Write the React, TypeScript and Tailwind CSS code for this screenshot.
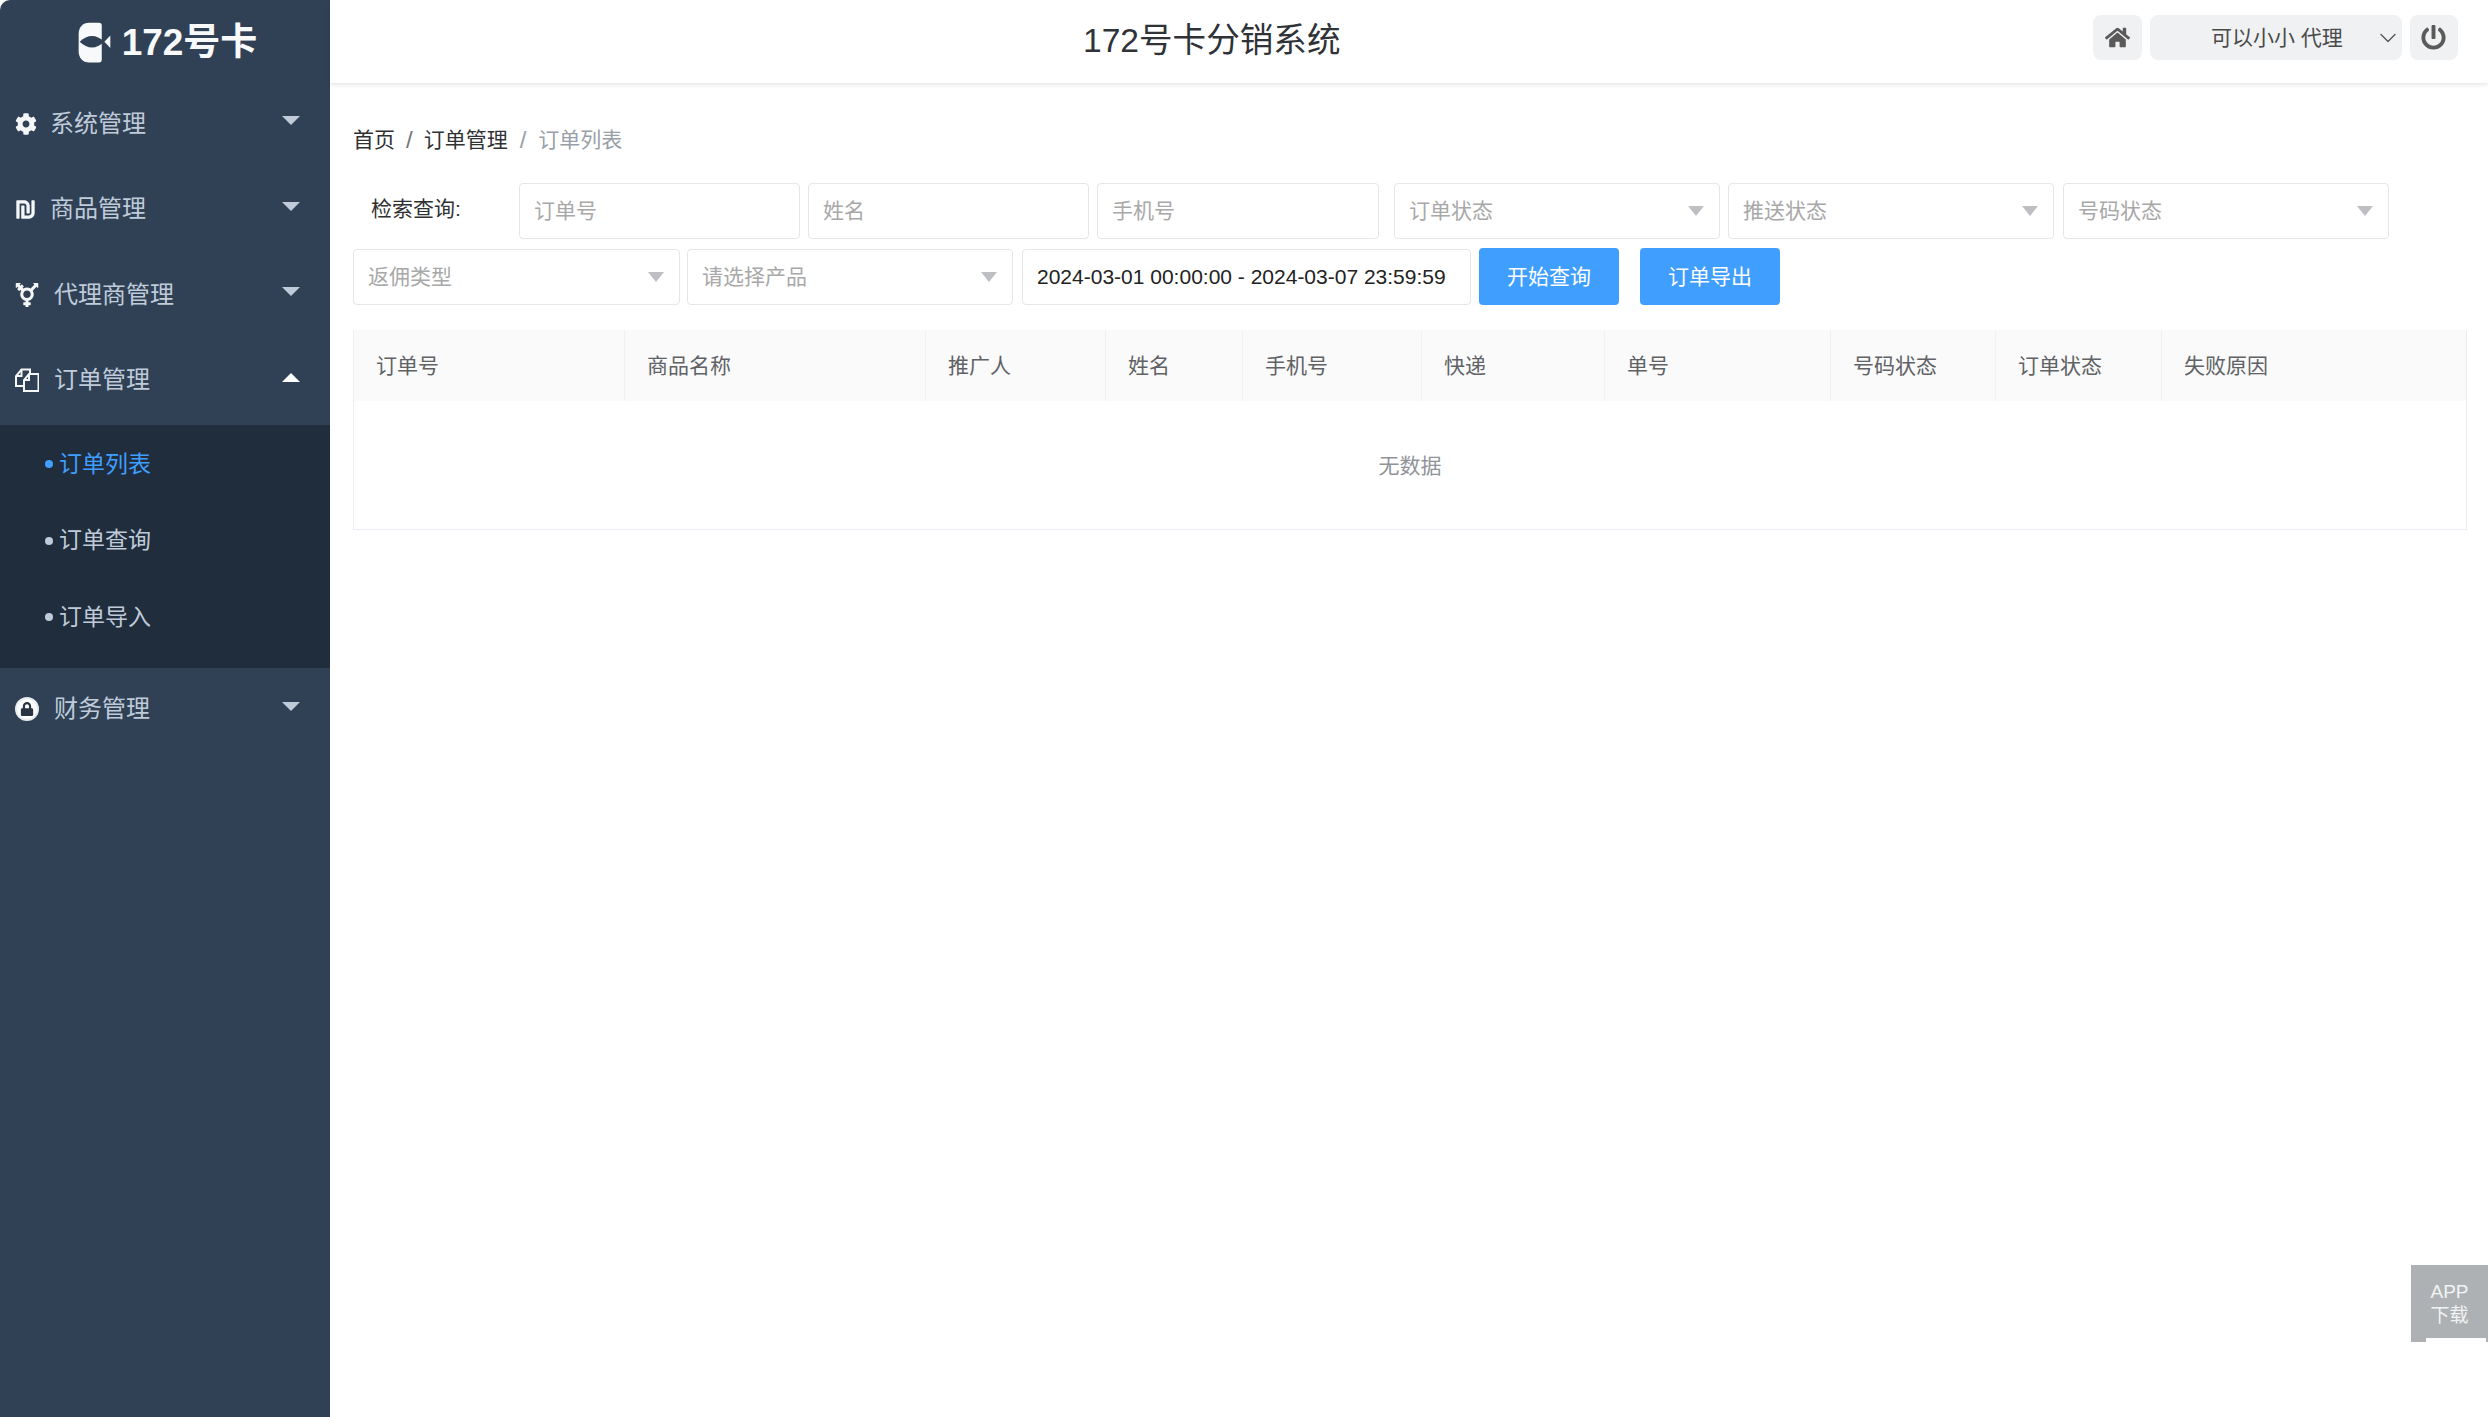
import { ChevronDown } from 'lucide-react';
import { FaCog, FaHome, FaPowerOff, FaShekelSign, FaTransgenderAlt, FaLock } from 'react-icons/fa';
import type { ReactNode } from 'react';

const font = '[font-family:"Liberation_Sans","Noto_Sans_CJK_SC",sans-serif]';

function Logo() {
  return (
    <svg width="33" height="42" viewBox="28 26 100 126" className="shrink-0">
      <path d="M62 28h30c5 0 8 3 8 8v104c0 5-3 8-8 8H62c-20 0-32-14-32-34V62c0-20 12-34 32-34Z" fill="#f7f9fb" />
      <path d="M33 85Q70 50 108 85Q70 120 33 85Z" fill="#304156" />
      <path d="M126 66v38l-18-19Z" fill="#f7f9fb" />
    </svg>
  );
}

function DocsIcon() {
  return (
    <svg width="24" height="24" viewBox="0 0 24 24" fill="none" stroke="#f4f6f8" strokeWidth="2">
      <path d="M15 6V1.5H6.5L1 8v10h8" />
      <path d="M6.5 1.5V8H1" />
      <path d="M14 6h9.5v17H9V12Z" />
      <path d="M14 6v6H9" />
    </svg>
  );
}

function LockIcon() {
  return (
    <span className="flex h-[24px] w-[24px] items-center justify-center rounded-full border-2 border-[#e8ecef] bg-white">
      <FaLock className="text-[14px] text-[#2b3442]" />
    </span>
  );
}

function Caret({ up, color }: { up?: boolean; color: string }) {
  return (
    <span
      className={`h-0 w-0 border-x-[9px] border-x-transparent ${up ? 'border-b-[9px]' : 'border-t-[9px]'} ${color}`}
    />
  );
}

function MenuRow({
  icon,
  label,
  textLeft,
  up,
  className,
}: {
  icon: ReactNode;
  label: string;
  textLeft: string;
  up?: boolean;
  className: string;
}) {
  return (
    <div className={`flex items-center pl-[15px] pr-[30px] ${className}`}>
      <span className="flex w-[24px] items-center justify-start text-[#f4f6f8]">{icon}</span>
      <span className={`flex-1 text-[24px] leading-none text-[#bfcbd9] ${textLeft}`}>{label}</span>
      <span className="-mt-[6px] flex">
        <Caret up={up} color={up ? 'border-b-white' : 'border-t-[#bfcbd9]'} />
      </span>
    </div>
  );
}

function Box({ children, className }: { children: ReactNode; className: string }) {
  return (
    <div
      className={`flex h-[56px] items-center rounded-[4px] border border-[#e4e6ea] bg-white pl-[14px] pr-[15px] text-[21px] text-[#a8a8a8] ${className}`}
    >
      {children}
    </div>
  );
}

function Select({ label, className }: { label: string; className: string }) {
  return (
    <Box className={`justify-between ${className}`}>
      <span>{label}</span>
      <span className="h-0 w-0 border-x-[8px] border-t-[10px] border-x-transparent border-t-[#bdbfc2]" />
    </Box>
  );
}

const columns = [
  { name: '订单号', w: 'w-[271px]' },
  { name: '商品名称', w: 'w-[301px]' },
  { name: '推广人', w: 'w-[180px]' },
  { name: '姓名', w: 'w-[137px]' },
  { name: '手机号', w: 'w-[179px]' },
  { name: '快递', w: 'w-[183px]' },
  { name: '单号', w: 'w-[226px]' },
  { name: '号码状态', w: 'w-[165px]' },
  { name: '订单状态', w: 'w-[166px]' },
  { name: '失败原因', w: 'flex-1' },
];

export default function App() {
  return (
    <div className={`flex h-[1417px] w-[2488px] overflow-hidden bg-white ${font}`}>
      <aside className="flex w-[330px] shrink-0 flex-col rounded-tl-[10px] bg-[#304156]">
        <div className="flex h-[81px] items-center justify-center gap-[11px] pl-[5px] pt-[4px]">
          <Logo />
          <span className="text-[37px] font-bold leading-none text-[#f7f9fb]">172号卡</span>
        </div>
        <MenuRow className="h-[85.5px]" icon={<FaCog className="text-[22px]" />} label="系统管理" textLeft="ml-[11px]" />
        <MenuRow className="h-[85.5px]" icon={<FaShekelSign className="text-[21px]" />} label="商品管理" textLeft="ml-[11px]" />
        <MenuRow className="h-[85.5px]" icon={<FaTransgenderAlt className="text-[24px]" />} label="代理商管理" textLeft="ml-[15px]" />
        <MenuRow className="h-[85.5px]" up icon={<DocsIcon />} label="订单管理" textLeft="ml-[15px]" />
        <div className="mt-[2px] flex h-[243px] flex-col bg-[#1f2d3d] pt-[1px]">
          {[
            { name: '订单列表', on: true },
            { name: '订单查询', on: false },
            { name: '订单导入', on: false },
          ].map((item) => (
            <div key={item.name} className="flex h-[76.5px] items-center pl-[45px]">
              <span className={`h-[8px] w-[8px] rounded-full ${item.on ? 'bg-[#409eff]' : 'bg-[#bfcbd9]'}`} />
              <span className={`ml-[6px] text-[23px] leading-none ${item.on ? 'text-[#409eff]' : 'text-[#bfcbd9]'}`}>
                {item.name}
              </span>
            </div>
          ))}
        </div>
        <MenuRow className="h-[82px]" icon={<LockIcon />} label="财务管理" textLeft="ml-[15px]" />
      </aside>

      <main className="relative min-w-0 flex-1">
        <header className="relative flex h-[83px] items-center justify-end pr-[30px] shadow-[0_2px_4px_rgba(0,21,41,0.1)]">
          <h1 className="absolute left-[753px] top-[18px] text-[33.6px] font-normal leading-[46px] text-[#2f3237]">
            172号卡分销系统
          </h1>
          <div className="-mt-[8px] flex items-center gap-[8px]">
            <button className="flex h-[45px] w-[49px] items-center justify-center rounded-[8px] bg-[#f0f1f2] text-[25px] text-[#5a5a5a]">
              <FaHome />
            </button>
            <button className="flex h-[45px] w-[252px] items-center rounded-[8px] bg-[#f0f1f2] pl-[61px] text-[21px] text-[#4a4a4a]">
              <span className="flex-1 whitespace-pre text-left">可以小小 代理</span>
              <ChevronDown size={28} strokeWidth={1.2} className="text-[#555]" />
            </button>
            <button className="flex h-[45px] w-[48px] items-center justify-center rounded-[8px] bg-[#f0f1f2] pr-[2px] text-[25px] text-[#5a5a5a]">
              <FaPowerOff />
            </button>
          </div>
        </header>

        <div className="pl-[23px] pr-[22px]">
          <nav className="flex h-[100px] items-start pt-[43px] text-[21px] leading-[28px]">
            <span className="text-[#303133]">首页</span>
            <span className="mx-[11px] text-[24px] text-[#777]">/</span>
            <span className="text-[#303133]">订单管理</span>
            <span className="mx-[12px] text-[24px] text-[#97a0a8]">/</span>
            <span className="text-[#97a0a8]">订单列表</span>
          </nav>

          <div className="flex items-center">
            <label className="w-[166px] pb-[5px] pl-[18px] text-[21px] text-[#303133]">检索查询:</label>
            <Box className="w-[281px]">订单号</Box>
            <Box className="ml-[8px] w-[281px]">姓名</Box>
            <Box className="ml-[8px] w-[282px]">手机号</Box>
            <Select label="订单状态" className="ml-[15px] w-[326px]" />
            <Select label="推送状态" className="ml-[8px] w-[326px]" />
            <Select label="号码状态" className="ml-[9px] w-[326px]" />
          </div>

          <div className="mt-[9px] flex items-center">
            <Select label="返佣类型" className="w-[327px]" />
            <Select label="请选择产品" className="ml-[7px] w-[326px]" />
            <Box className="ml-[9px] w-[449px]">
              <span className="whitespace-nowrap text-[#222]">2024-03-01 00:00:00 - 2024-03-07 23:59:59</span>
            </Box>
            <button className="ml-[8px] h-[57px] w-[140px] rounded-[4px] bg-[#409eff] text-[21px] text-white">开始查询</button>
            <button className="ml-[21px] h-[57px] w-[140px] rounded-[4px] bg-[#409eff] text-[21px] text-white">订单导出</button>
          </div>

          <div className="mt-[25px] w-[2114px] border-b border-l border-r border-[#ebeef5]">
            <div className="flex h-[71px] bg-[#fafafa]">
              {columns.map((col) => (
                <div
                  key={col.name}
                  className={`flex items-center border-r border-[#f0f1f3] pl-[22px] text-[21px] text-[#606266] last:border-r-0 ${col.w}`}
                >
                  {col.name}
                </div>
              ))}
            </div>
            <div className="flex h-[128px] items-center justify-center pt-[1px] text-[21px] text-[#909399]">无数据</div>
          </div>
        </div>

        <div className="absolute bottom-[75px] right-0 flex h-[77px] w-[77px] flex-col items-center justify-center bg-[#aeb1b3] text-[19px] leading-[24px] text-[#f2f3f4]">
          <span>APP</span>
          <span>下载</span>
          <span className="absolute -bottom-[2px] right-[2px] h-[6px] w-[60px] bg-white" />
        </div>
      </main>
    </div>
  );
}
